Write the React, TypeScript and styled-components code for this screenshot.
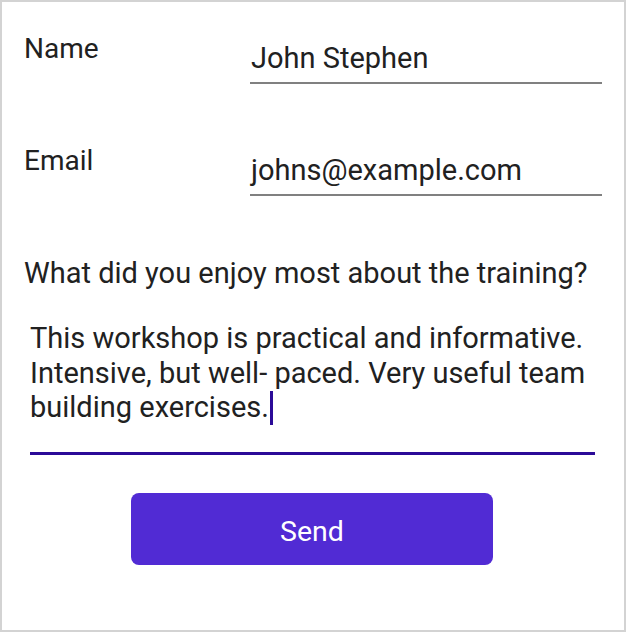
import React from 'react';
import styled, { createGlobalStyle } from 'styled-components';

const GlobalStyle = createGlobalStyle`
  html, body {
    margin: 0;
    padding: 0;
    background: #ffffff;
  }
  body {
    font-family: Roboto, "Liberation Sans", sans-serif;
    color: #212121;
  }
`;

const Frame = styled.div`
  box-sizing: border-box;
  width: 626px;
  height: 632px;
  border: 2px solid #d3d3d3;
  padding: 30px 22px 0 22px;
  display: flex;
  flex-direction: column;
`;

const FieldRow = styled.div`
  display: grid;
  grid-template-columns: 226px 1fr;
  align-items: start;
  margin-bottom: 60px;
`;

const Label = styled.div`
  font-size: 28px;
  line-height: 34px;
`;

const Entry = styled.div`
  font-size: 29px;
  line-height: 34px;
  padding: 9px 0 7px 1px;
  border-bottom: 2px solid #808080;
`;

const Question = styled.div`
  font-size: 29px;
  line-height: 34px;
`;

const Editor = styled.div`
  margin: 31px 7px 0 6px;
  padding-bottom: 27px;
  border-bottom: 3px solid #2b0b98;
  font-size: 29px;
  line-height: 34.5px;
`;

const Caret = styled.span`
  display: inline-block;
  width: 3px;
  height: 34px;
  margin-left: 1px;
  background: #2b0b98;
  vertical-align: -8px;
`;

const SendButton = styled.button`
  align-self: center;
  margin: 38px 2px 0 0;
  padding: 4px 0 0;
  width: 362px;
  height: 72px;
  border: none;
  border-radius: 8px;
  background: #512bd4;
  color: #ffffff;
  font-family: Roboto, "Liberation Sans", sans-serif;
  font-size: 28.5px;
  cursor: pointer;
`;

export default function App() {
  return (
    <>
      <GlobalStyle />
      <Frame>
        <FieldRow>
          <Label>Name</Label>
          <Entry>John Stephen</Entry>
        </FieldRow>
        <FieldRow>
          <Label>Email</Label>
          <Entry>johns@example.com</Entry>
        </FieldRow>
        <Question>What did you enjoy most about the training?</Question>
        <Editor>
          This workshop is practical and informative. Intensive, but well- paced. Very useful team building exercises.
          <Caret />
        </Editor>
        <SendButton>Send</SendButton>
      </Frame>
    </>
  );
}
